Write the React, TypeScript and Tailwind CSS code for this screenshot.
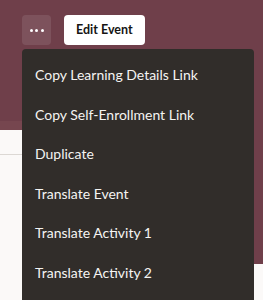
const items = [
  "Copy Learning Details Link",
  "Copy Self-Enrollment Link",
  "Duplicate",
  "Translate Event",
  "Translate Activity 1",
  "Translate Activity 2",
];

export default function App() {
  return (
    <div className="relative w-[263px] h-[300px] overflow-hidden bg-[#6f3f4a] font-['Lato',sans-serif]">
      {/* page behind the menu */}
      <div className="absolute left-0 top-[121px] w-[22px] h-[9px] bg-[#76464f]" />
      <div className="absolute left-0 top-[130px] w-[22px] h-[170px] bg-[#fbf9f8]">
        <div className="mt-[24px] h-px bg-[#dcd8d4]" />
      </div>
      <div className="absolute right-0 top-[264px] w-[9px] h-[36px] bg-[#fbf9f8]" />

      <div className="relative flex items-center gap-[13px] pl-[22px] pt-[15px]">
        <button className="w-[29px] h-[30px] rounded-[4px] bg-white/10 flex items-center justify-center gap-[2.5px]">
          <span className="w-[3px] h-[3px] rounded-full bg-white" />
          <span className="w-[3px] h-[3px] rounded-full bg-white" />
          <span className="w-[3px] h-[3px] rounded-full bg-white" />
        </button>
        <button className="h-[30px] px-[12px] rounded-[4px] bg-white text-[12.5px] font-bold text-[#161513]">
          Edit Event
        </button>
      </div>

      <div className="relative ml-[22px] mt-[4px] w-[232px] h-[260px] rounded-t-[4px] bg-[#312d2a] pt-[6px]">
        {items.map((t) => (
          <div key={t} className="h-[39.5px] flex items-center pl-[13px] text-[14px] text-[#f5f4f2]">
            {t}
          </div>
        ))}
      </div>
    </div>
  );
}
